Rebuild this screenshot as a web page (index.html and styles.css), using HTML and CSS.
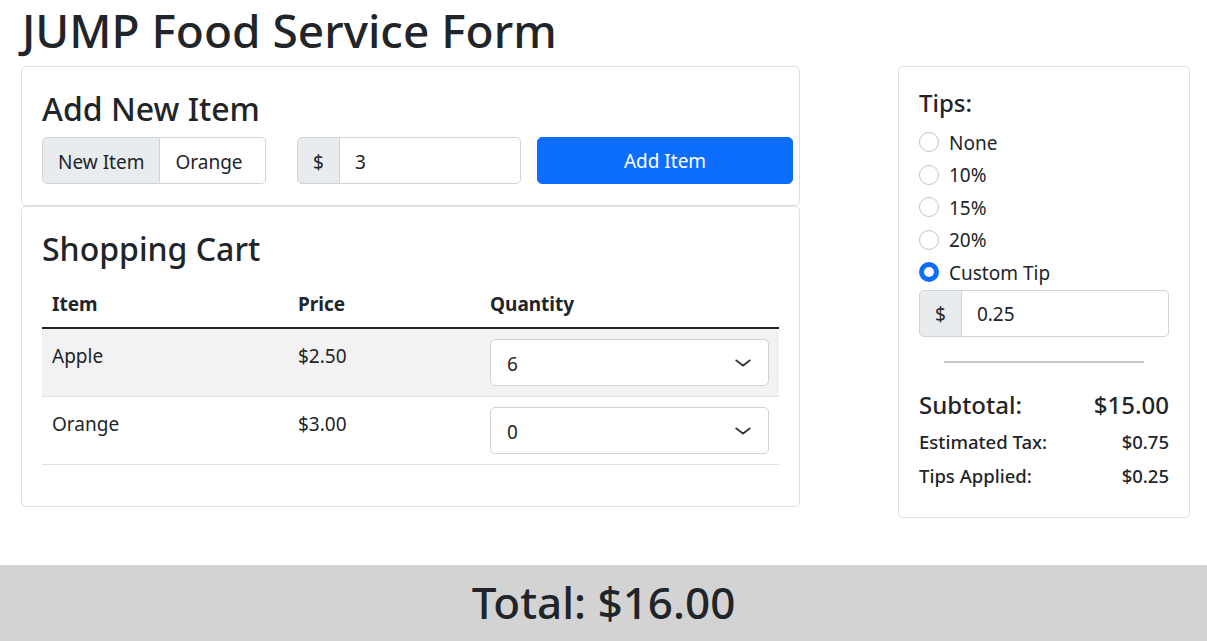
FILE: index.html
```html
<!DOCTYPE html>
<html lang="en">
<head>
<meta charset="utf-8">
<title>JUMP Food Service Form</title>
<link rel="stylesheet" href="styles.css">
</head>
<body>
<div class="page">
  <h1 class="title">JUMP Food Service Form</h1>
  <main class="main">
    <div class="left">
      <section class="card card-add">
        <h3 class="card-title">Add New Item</h3>
        <div class="add-row">
          <div class="input-group g-name">
            <span class="addon">New Item</span>
            <input class="field" type="text" value="Orange">
          </div>
          <div class="input-group g-price">
            <span class="addon">$</span>
            <input class="field" type="text" value="3">
          </div>
          <button class="btn-primary" type="button">Add Item</button>
        </div>
      </section>
      <section class="card card-cart">
        <h3 class="card-title">Shopping Cart</h3>
        <table class="cart">
          <thead>
            <tr><th class="c-item">Item</th><th class="c-price">Price</th><th class="c-qty">Quantity</th></tr>
          </thead>
          <tbody>
            <tr class="striped">
              <td>Apple</td><td>$2.50</td>
              <td><div class="select"><span>6</span><svg class="chev" viewBox="0 0 16 16" width="18" height="14" preserveAspectRatio="none"><path d="m2 5 6 6 6-6" fill="none" stroke="#343a40" stroke-width="1.8" stroke-linecap="round" stroke-linejoin="round"/></svg></div></td>
            </tr>
            <tr>
              <td>Orange</td><td>$3.00</td>
              <td><div class="select"><span>0</span><svg class="chev" viewBox="0 0 16 16" width="18" height="14" preserveAspectRatio="none"><path d="m2 5 6 6 6-6" fill="none" stroke="#343a40" stroke-width="1.8" stroke-linecap="round" stroke-linejoin="round"/></svg></div></td>
            </tr>
          </tbody>
        </table>
      </section>
    </div>
    <aside class="card side">
      <h5 class="tips-title">Tips:</h5>
      <div class="radio-row"><span class="radio"></span><span>None</span></div>
      <div class="radio-row"><span class="radio"></span><span>10%</span></div>
      <div class="radio-row"><span class="radio"></span><span>15%</span></div>
      <div class="radio-row"><span class="radio"></span><span>20%</span></div>
      <div class="radio-row"><span class="radio checked"></span><span>Custom Tip</span></div>
      <div class="input-group tip-group">
        <span class="addon">$</span>
        <input class="field" type="text" value="0.25">
      </div>
      <hr class="divider">
      <div class="sum-row sum-big"><span>Subtotal:</span><span>$15.00</span></div>
      <div class="sum-row sum-small"><span>Estimated Tax:</span><span>$0.75</span></div>
      <div class="sum-row sum-small"><span>Tips Applied:</span><span>$0.25</span></div>
    </aside>
  </main>
  <footer class="footer">Total: $16.00</footer>
</div>
</body>
</html>
```
FILE: styles.css
```css
* { box-sizing: border-box; }
html, body { margin: 0; padding: 0; }
body {
  font-family: "Noto Sans", "Open Sans", sans-serif;
  font-size: 19px;
  line-height: 1.5;
  color: #212529;
  background: #fff;
}
.page {
  min-height: 100vh;
  display: flex;
  flex-direction: column;
}
.title {
  margin: 0 0 8px 0;
  padding: 1px 0 0 22px;
  height: 58px;
  font-size: 46px;
  font-weight: 500;
  line-height: 58px;
}
.main {
  display: flex;
  justify-content: space-between;
  align-items: flex-start;
  padding: 0 17px 0 21px;
}
.left { width: 779px; }
.card {
  border: 1px solid #dfdfdf;
  border-radius: 5px;
  padding: 20px;
  background: #fff;
}
.card-add { padding-bottom: 21px; }
.card-cart { padding-bottom: 21px; }
.card-title {
  margin: 0 0 10px 0;
  padding-top: 2px;
  height: 40px;
  font-size: 32px;
  font-weight: 500;
  line-height: 40px;
}
.add-row {
  display: flex;
  align-items: stretch;
}
.add-row > * { flex: none; }
.g-name { width: 224px; }
.g-price { width: 224px; margin-left: 31px; }
.add-row .btn-primary { width: 256px; margin-left: 16px; }
.input-group {
  display: flex;
  height: 47px;
}
.addon {
  display: flex;
  align-items: center;
  padding: 3px 15px 0;
  background: #e9ecef;
  border: 1px solid #ced4da;
  border-radius: 5px 0 0 5px;
  white-space: nowrap;
}
.field {
  flex: 1;
  min-width: 0;
  font: inherit;
  color: #212529;
  padding: 3px 15px 0;
  border: 1px solid #ced4da;
  border-left: none;
  border-radius: 0 5px 5px 0;
  background: #fff;
}
.btn-primary {
  height: 47px;
  font: inherit;
  color: #fff;
  padding-top: 3px;
  background: #0d6efd;
  border: 1px solid #0d6efd;
  border-radius: 5px;
}
.cart {
  width: 100%;
  border-collapse: collapse;
  margin-bottom: 20px;
}
.cart th, .cart td {
  text-align: left;
  vertical-align: top;
  padding: 10px;
  line-height: 30px;
}
.cart th { font-weight: 700; border-bottom: 2px solid #212529; padding: 12px 10px 8px; }
.cart td { border-bottom: 1px solid #dee2e6; }
.cart td:not(:last-child) { padding-top: 12px; padding-bottom: 8px; }
.c-item { width: 246px; }
.c-price { width: 192px; }
.striped td { background: #f2f2f2; }
.select {
  display: flex;
  align-items: center;
  justify-content: space-between;
  height: 47px;
  padding: 3px 16px 0 16px;
  border: 1px solid #ced4da;
  border-radius: 5px;
  background: #fff;
}
.chev { margin-top: -3px; }
.side { width: 292px; padding-bottom: 19px; }
.tips-title {
  margin: 0 0 10px 0;
  padding-top: 1px;
  height: 30px;
  font-size: 24px;
  font-weight: 500;
  line-height: 30px;
}
.radio-row {
  display: flex;
  align-items: center;
  height: 30px;
  margin-bottom: 2.5px;
}
.radio-row span:last-child { padding-top: 2px; }
.radio {
  width: 20px;
  height: 20px;
  border-radius: 50%;
  border: 1px solid #c4c4c4;
  margin-right: 10px;
  flex: none;
}
.radio.checked {
  border: 5px solid #0d6efd;
  background: #fff;
}
.divider {
  width: 80%;
  height: 2px;
  margin: 24px auto 27px;
  border: 0;
  background: #c9c9cb;
}
.sum-row {
  display: flex;
  justify-content: space-between;
  font-weight: 500;
}
.sum-big {
  font-size: 24px;
  line-height: 30px;
  height: 30px;
  margin-bottom: 10px;
}
.sum-small {
  font-size: 18.5px;
  line-height: 24px;
  height: 24px;
  margin-bottom: 10px;
}
.footer {
  margin-top: auto;
  background: #d3d3d3;
  text-align: center;
  font-size: 44px;
  font-weight: 500;
  line-height: 56px;
  padding: 9px 0 11px;
}
```
